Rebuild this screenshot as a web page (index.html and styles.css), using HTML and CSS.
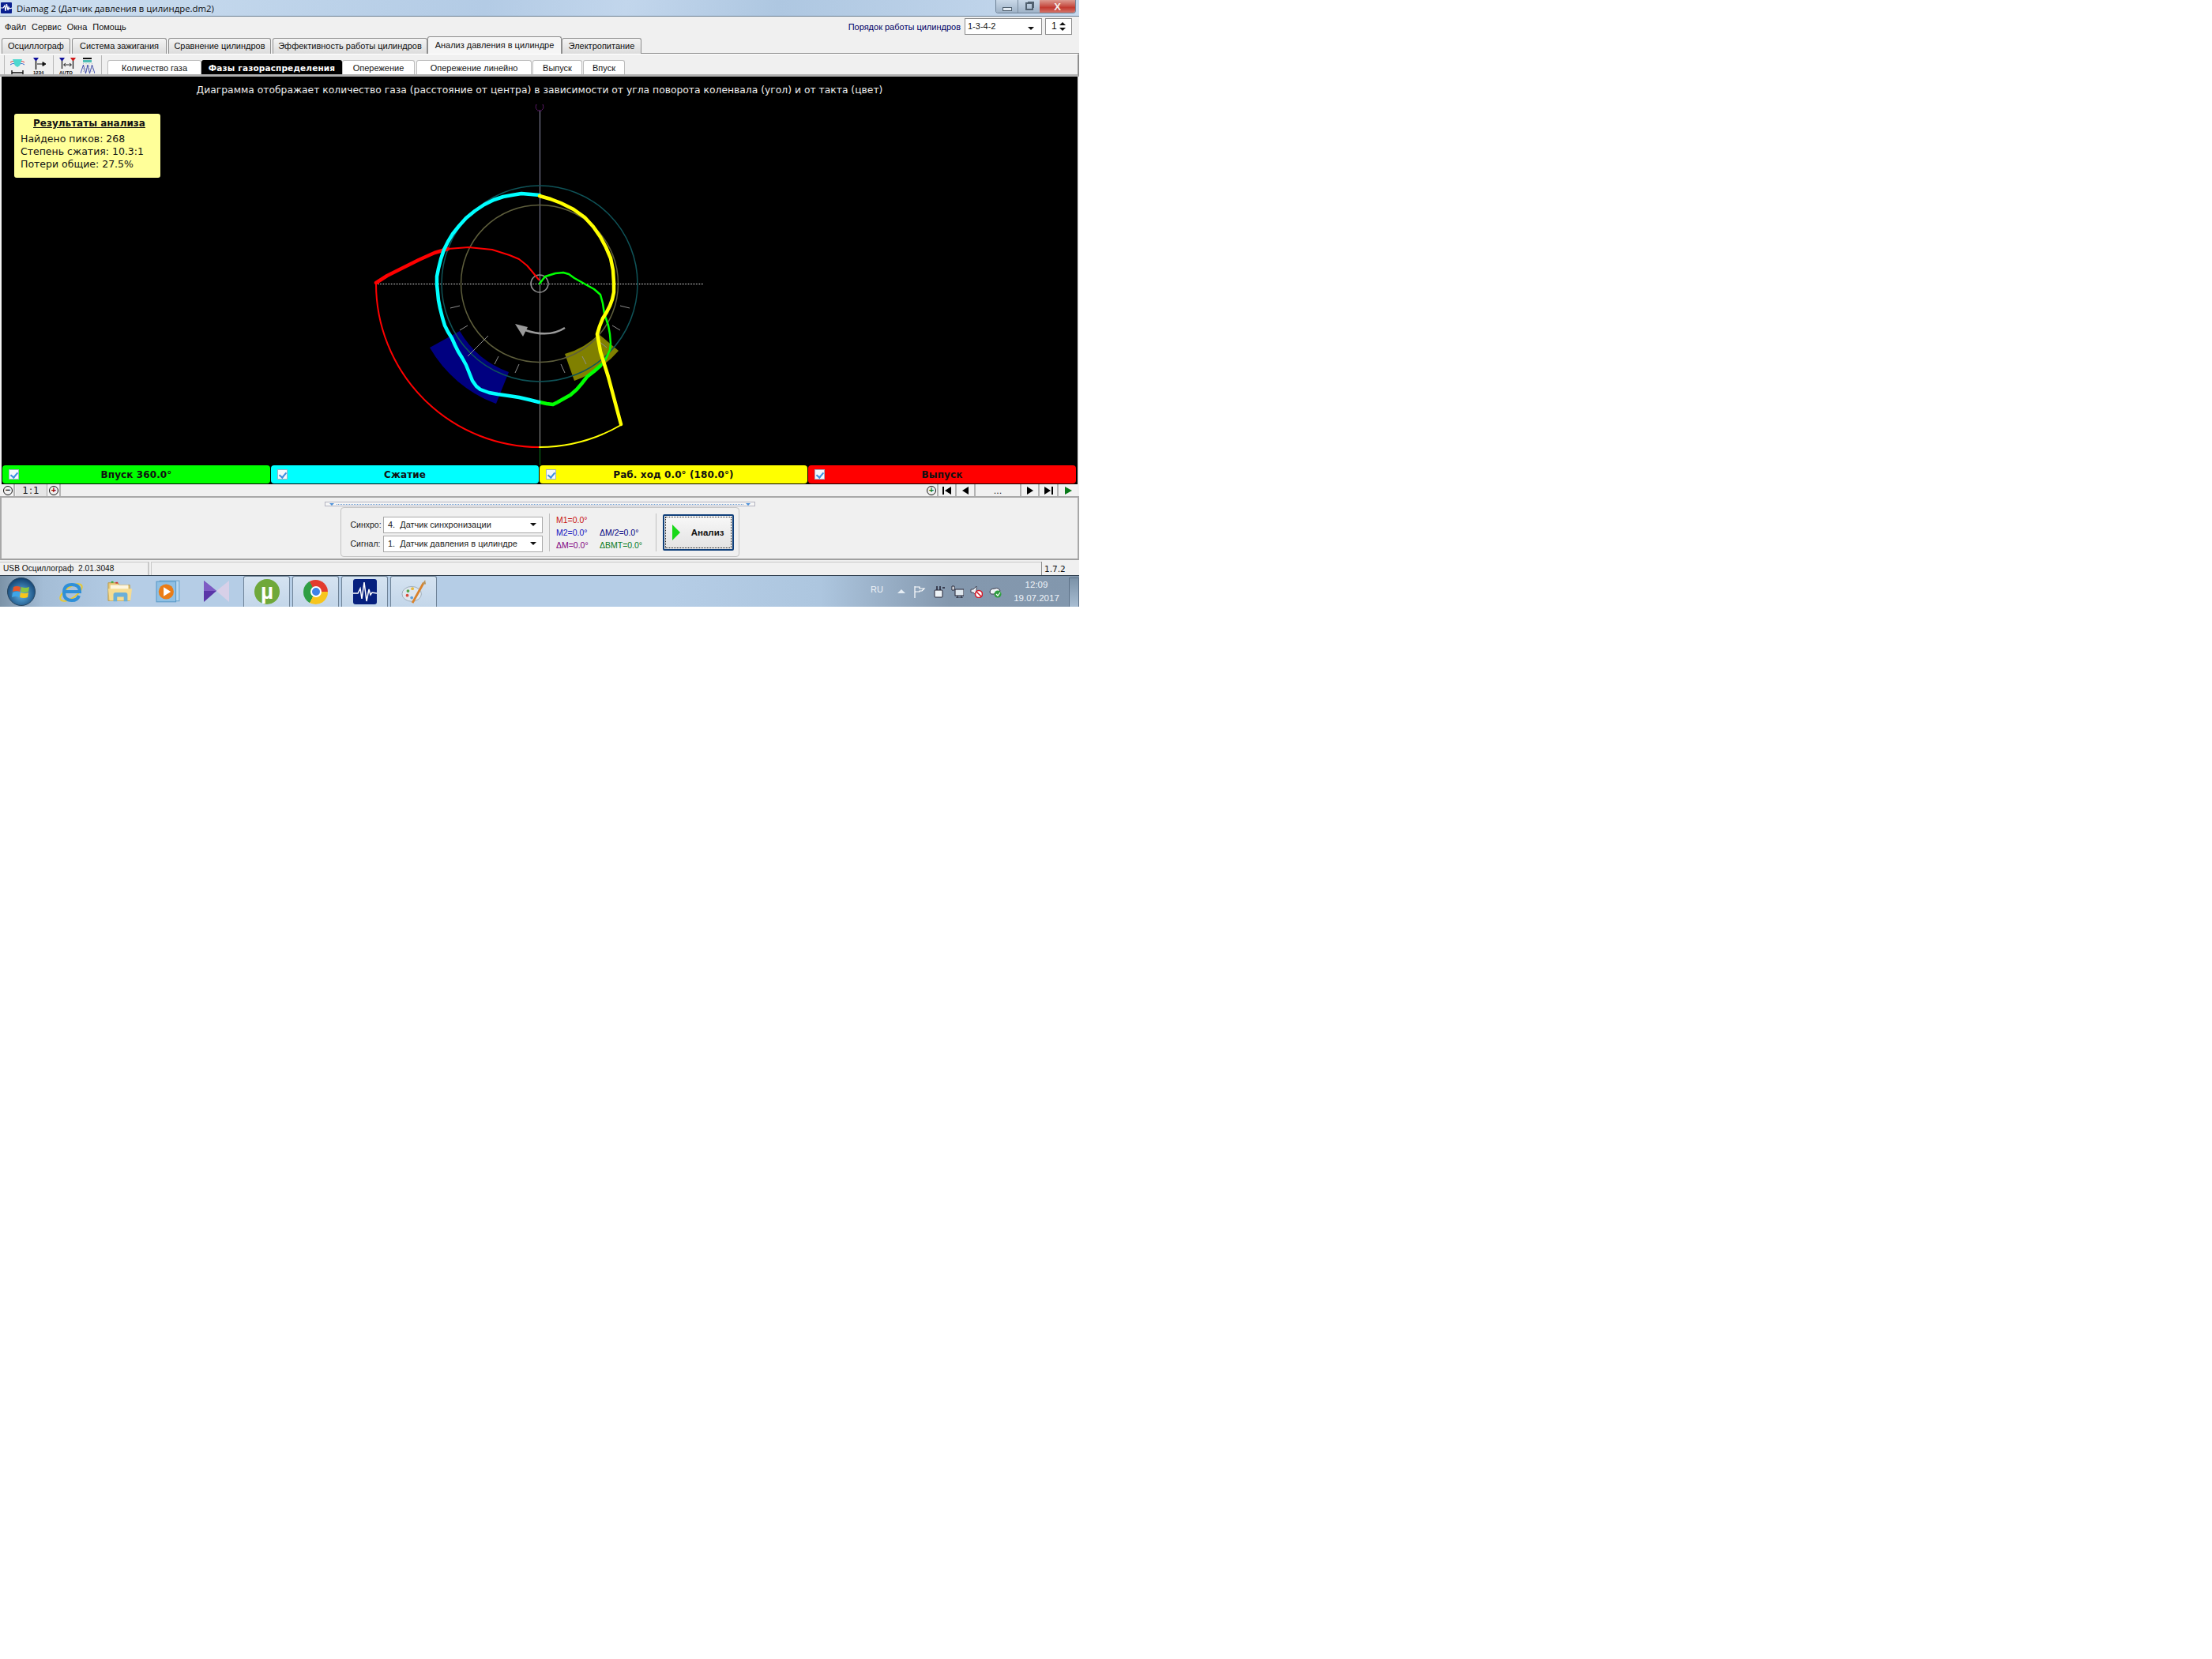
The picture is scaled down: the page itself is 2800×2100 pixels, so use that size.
FILE: index.html
```html
<!DOCTYPE html>
<html lang="ru">
<head>
    <meta charset="UTF-8">
    <title>Diamag 2</title>
    <link rel="stylesheet" href="styles.css">
</head>
<body>
<div class="window">
    <!-- title bar -->
    <div class="titlebar">
        <svg class="app-icon" viewBox="0 0 14 14"><rect width="14" height="14" rx="1" fill="#0a1f8f"/><polyline points="0,7 3,7 5,4 6,11 7.5,2 9,10 10,6 11,8 14,7" fill="none" stroke="#fff" stroke-width="1.2"/></svg>
        <span class="title-text">Diamag 2 (Датчик давления в цилиндре.dm2)</span>
        <div class="win-btns">
            <div class="win-btn win-min"><span class="min-glyph"></span></div>
            <div class="win-btn win-max"><span class="max-glyph"></span></div>
            <div class="win-btn win-close">X</div>
        </div>
    </div>

    <!-- menu -->
    <div class="menubar">
        <div class="menu-items">
            <span>Файл</span><span>Сервис</span><span>Окна</span><span>Помощь</span>
        </div>
        <div class="cyl-order">
            <span class="cyl-label">Порядок работы цилиндров</span>
            <div class="cyl-combo"><span>1-3-4-2</span><i class="arrow-down"></i></div>
            <div class="cyl-spin"><span>1</span><div class="spin-arrows"><i class="arrow-up"></i><i class="arrow-down"></i></div></div>
        </div>
    </div>

    <!-- main tabs -->
    <div class="main-tabs">
        <div class="tab t1">Осциллограф</div>
        <div class="tab t2">Система зажигания</div>
        <div class="tab t3">Сравнение цилиндров</div>
        <div class="tab t4">Эффективность работы цилиндров</div>
        <div class="tab t5 active">Анализ давления в цилиндре</div>
        <div class="tab t6">Электропитание</div>
        <div class="tabs-rest"></div>
    </div>

    <!-- toolbar + sub tabs -->
    <div class="toolbar">
        <span class="tool-sep first"></span>
        <svg class="tool t-a" viewBox="0 0 20 22"><path d="M1 7 Q6 3 10 9 Q14 3 19 7" fill="none" stroke="#d33" stroke-width="1"/><path d="M1 10 Q6 6 10 12 Q14 6 19 10" fill="none" stroke="#36c" stroke-width="1"/><path d="M4 3 H16 L13 11 L10 13 L7 11 Z" fill="#4fd8cf"/><path d="M3 20 H17 M3 17 V22 M17 17 V22" stroke="#111" stroke-width="1.4" fill="none"/></svg>
        <svg class="tool t-b" viewBox="0 0 18 22"><path d="M1 1 H8 L4.500 6 Z" fill="#11119c"/><path d="M4.500 5 V16" stroke="#111" stroke-width="1.4"/><path d="M6 9 H15 M13 6.500 L17 9 L13 11.500 Z" stroke="#111" fill="#111"/><text x="1" y="21.500" class="tool-text">1234</text></svg>
        <span class="tool-sep second"></span>
        <svg class="tool t-c" viewBox="0 0 21 22"><path d="M0 1 H7 L3.500 6 Z" fill="#11119c"/><path d="M14 1 H21 L17.500 6 Z" fill="#d01818"/><path d="M3.500 5 V15 M17.500 5 V15" stroke="#111" stroke-width="1.2"/><path d="M6 10 H15 M8 8 L5.500 10 L8 12 M13 8 L15.500 10 L13 12" stroke="#111" fill="none" stroke-width=".9"/><text x="0" y="21.500" class="tool-text">AUTO</text></svg>
        <svg class="tool t-d" viewBox="0 0 18 22"><rect x="3" y="1" width="11" height="2" fill="#111"/><rect x="3" y="4" width="11" height="3" fill="#4fbdb5"/><path d="M3.500 8 V20 M7 8 V20 M11 8 V20 M14.500 8 V20" stroke="#bbb" stroke-dasharray="1 1"/><path d="M0 21 L3.500 10 L6.500 21 L9 10 L11.500 21 L14.500 10 L18 21" fill="none" stroke="#2030a0" stroke-width=".8"/></svg>
        <span class="tool-sep third"></span>
        <div class="subtabs">
            <div class="subtab s1">Количество газа</div>
            <div class="subtab s2 current">Фазы газораспределения</div>
            <div class="subtab s3">Опережение</div>
            <div class="subtab s4">Опережение линейно</div>
            <div class="subtab s5">Выпуск</div>
            <div class="subtab s6">Впуск</div>
        </div>
    </div>

    <!-- diagram -->
    <div class="viewer">
        <div class="diagram">
            <svg class="plot" viewBox="2 97 1362 492">
                <path class="sector-blue" d="M582 419 A118 118 0 0 0 644 471 L628 511 A161 161 0 0 1 544 440 Z"/>
                <path class="sector-olive" d="M715 448 A95 95 0 0 0 758 423 L783 444 A131 131 0 0 1 727 482 Z"/>

                <line class="axis-v-top" x1="683.500" y1="140" x2="683.500" y2="359"/>
                <line class="axis-v" x1="683.500" y1="359" x2="683.500" y2="566"/>
                <line class="axis-v-green" x1="683.500" y1="566" x2="683.500" y2="589"/>
                <line class="axis-h" x1="475" y1="359.500" x2="890" y2="359.500"/>
                <path class="top-mark" d="M679 132 Q677 137 680 139 M687 132 Q689 137 686 139 M680 140 H686"/>

                <circle class="ring-olive" cx="683" cy="359" r="99.500"/>
                <circle class="ring-teal" cx="683" cy="359" r="124"/>
                <circle class="ring-center" cx="683" cy="359" r="11"/>

                <g class="ticks">
                    <line x1="570" y1="390" x2="582" y2="387"/>
                    <line x1="582" y1="418" x2="592" y2="412"/>
                    <line x1="592" y1="451" x2="618" y2="425"/>
                    <line x1="626" y1="461" x2="631" y2="451"/>
                    <line x1="652" y1="472" x2="657" y2="461"/>
                    <line x1="710" y1="461" x2="715" y2="472"/>
                    <line x1="737" y1="451" x2="742" y2="461"/>
                    <line x1="758" y1="432" x2="768" y2="440"/>
                    <line x1="775" y1="412" x2="785" y2="418"/>
                    <line x1="785" y1="387" x2="797" y2="390"/>
                </g>

                <path class="turn-arrow" d="M715 415 Q695 428 665 418"/>
                <path class="turn-head" d="M652 410 L668 414 L662 426 Z"/>

                <polyline class="trace trace-red" points="476,358 490,349 510,339 530,329 550,320 567,315"/>
                <polyline class="trace trace-red thin" points="567,315 593,313 623,316 645,323 657,328 667,336 673,343 682,354"/>
                <path class="trace trace-red thin" d="M683 566 A207 207 0 0 1 476 359"/>
                <polyline class="trace trace-green thin" points="683,359 690,350 703,346 713,345 720,347 727,352 743,361 752,366 760,373 763,384 765,397 770,412 772,423 773,435 772,443 767,454 760,463"/>
                <polyline class="trace trace-green" points="760,463 752,470 743,477 736,486 730,493 722,500 713,505 706,509 700,512 692,511 683,509"/>
                <polyline class="trace trace-cyan" points="683,247 672,246 660,245 648,247 637,249 625,253 613,259 601,267 590,276 581,286 573,296 567,306 562,316 558,328 555,340 553,350 553,360 554,370 555,380 557,390 560,402 563,412 567,420 572,428 576,437 580,445 585,453 590,462 594,472 598,482 603,489 608,493 619,497 630,499 644,501 657,503 670,506 682,509"/>
                <polyline class="trace trace-yellow" points="683,248 697,252 710,257 726,265 740,275 751,287 760,300 767,313 773,327 776,342 777,358 777,370 775,379 772,387 768,395 763,403 759,413 756,423 758,434 760,445 765,461 770,477 774,492 778,507 782,522 786,537"/>
                <path class="trace trace-yellow thin" d="M786 538 A207 207 0 0 1 683 566"/>
            </svg>
            <div class="caption">Диаграмма отображает количество газа (расстояние от центра) в зависимости от угла поворота коленвала (угол) и от такта (цвет)</div>
            <div class="results">
                <div class="results-title">Результаты анализа</div>
                <div>Найдено пиков: 268</div>
                <div>Степень сжатия: 10.3:1</div>
                <div>Потери общие: 27.5%</div>
            </div>
        </div>
        <div class="phases">
            <div class="phase green"><span class="check"></span><b>Впуск 360.0°</b></div>
            <div class="phase cyan"><span class="check"></span><b>Сжатие</b></div>
            <div class="phase yellow"><span class="check"></span><b>Раб. ход 0.0° (180.0°)</b></div>
            <div class="phase red"><span class="check"></span><b>Выпуск</b></div>
        </div>
    </div>

    <!-- zoom + navigation -->
    <div class="navrow">
        <div class="nav-left">
            <div class="nav-btn round-btn"><span class="round minus">−</span></div>
            <div class="nav-scale">1:1</div>
            <div class="nav-btn round-btn"><span class="round plus-red">+</span></div>
        </div>
        <div class="nav-right">
            <div class="nav-btn round-btn"><span class="round plus-green">+</span></div>
            <div class="nav-btn n-first"><svg viewBox="0 0 12 10"><path d="M0 0 H2 V10 H0 Z M11 0 V10 L3 5 Z"/></svg></div>
            <div class="nav-btn n-prev"><svg viewBox="0 0 12 10"><path d="M10 0 V10 L2 5 Z"/></svg></div>
            <div class="nav-pos">...</div>
            <div class="nav-btn n-next"><svg viewBox="0 0 12 10"><path d="M2 0 V10 L10 5 Z"/></svg></div>
            <div class="nav-btn n-last"><svg viewBox="0 0 12 10"><path d="M1 0 V10 L9 5 Z M10 0 H12 V10 H10 Z"/></svg></div>
            <div class="nav-btn n-play"><svg viewBox="0 0 12 10"><path class="play-green" d="M2 0 V10 L11 5 Z"/></svg></div>
        </div>
    </div>

    <!-- analysis panel -->
    <div class="panel">
        <div class="splitter"><i></i><span class="split-dots"></span><i></i></div>
        <div class="group">
            <div class="selects">
                <div class="select-row"><label>Синхро:</label><div class="combo"><span>4.&nbsp; Датчик синхронизации</span><i class="arrow-down"></i></div></div>
                <div class="select-row"><label>Сигнал:</label><div class="combo"><span>1.&nbsp; Датчик давления в цилиндре</span><i class="arrow-down"></i></div></div>
            </div>
            <span class="group-sep"></span>
            <div class="markers">
                <span class="m-red">M1=0.0°</span><span></span>
                <span class="m-blue">M2=0.0°</span><span class="m-navy">ΔM/2=0.0°</span>
                <span class="m-purple">ΔM=0.0°</span><span class="m-green">ΔBMT=0.0°</span>
            </div>
            <span class="group-sep"></span>
            <div class="run-btn">
                <div class="run-inner">
                    <svg class="run-icon" viewBox="0 0 10 20"><path d="M0 0 L10 10 L0 20 Z"/></svg>
                    <span>Анализ</span>
                </div>
            </div>
        </div>
    </div>

    <!-- status bar -->
    <div class="statusbar">
        <div class="st-a">USB Осциллограф&nbsp; 2.01.3048</div>
        <div class="st-b"></div>
        <div class="st-c">1.7.2</div>
    </div>

    <!-- taskbar -->
    <div class="taskbar">
        <div class="start-orb">
            <svg viewBox="0 0 36 36">
                <defs><radialGradient id="orb" cx=".5" cy=".6" r=".6"><stop offset="0" stop-color="#5fb4e8"/><stop offset="1" stop-color="#123f6e"/></radialGradient></defs>
                <circle cx="18" cy="18" r="17.500" fill="url(#orb)" stroke="#27455f"/>
                <path d="M8 12 Q12 10 17 12 L16 18 Q12 16 7 18 Z" fill="#e8562a"/>
                <path d="M18 12 Q23 14 28 12 L27 18 Q22 20 17 18 Z" fill="#8cc63f"/>
                <path d="M7 19 Q12 17 16 19 L15 25 Q11 23 6 25 Z" fill="#3fa6e8"/>
                <path d="M17 19 Q22 21 27 19 L26 25 Q21 27 16 25 Z" fill="#f7c61b"/>
            </svg>
        </div>
        <div class="pin pin-ie">
            <svg viewBox="0 0 32 32"><ellipse cx="15" cy="17" rx="16" ry="7" transform="rotate(-35 15 17)" fill="none" stroke="#e9c92f" stroke-width="2"/><path d="M6 16 H26 Q26 7 16 7 Q6 7 6 17 Q6 27 16 27 Q23 27 25 21" fill="none" stroke="#2e8fd8" stroke-width="4"/></svg>
        </div>
        <div class="pin pin-folder">
            <svg viewBox="0 0 34 32"><path d="M1 4 H14 L16 7 H30 V28 H1 Z" fill="#e8c878" stroke="#b89a4c"/><rect x="4" y="7" width="24" height="8" fill="#fdf6e0"/><rect x="5" y="2" width="3" height="2" fill="#3a3"/><rect x="11" y="3" width="3" height="2" fill="#c33"/><path d="M1 12 H33 L31 28 H3 Z" fill="#f6dc92"/><path d="M8 29 V20 Q8 17 11 17 H24 Q27 17 27 20 V29 H22 V23 H13 V29 Z" fill="#6aafd8"/></svg>
        </div>
        <div class="pin pin-media">
            <svg viewBox="0 0 30 30"><rect x="5" y="2" width="23" height="24" fill="#bcd8ee" stroke="#6aa5cf"/><rect x="1" y="3" width="23" height="24" fill="#8fc0e4" stroke="#5a9ac8"/><circle cx="12.500" cy="15" r="9" fill="#ea7d16"/><path d="M9.500 9.500 L18 15 L9.500 20.500 Z" fill="#fff"/></svg>
        </div>
        <div class="pin pin-vs">
            <svg viewBox="0 0 34 32"><path d="M1 2 L17 15 L1 29 Z" fill="#5a36a8"/><path d="M33 2 L17 15 L33 29 Z" fill="#d8d0e8"/><path d="M1 2 L17 15 L1 15 Z" fill="#7e5cc4"/></svg>
        </div>
        <div class="task-btn first-btn">
            <svg viewBox="0 0 32 32"><circle cx="16" cy="16" r="16" fill="#6fa83a"/><text x="16" y="25" class="utorrent-glyph">µ</text></svg>
        </div>
        <div class="task-btn">
            <div class="chrome"><span></span></div>
        </div>
        <div class="task-btn">
            <svg viewBox="0 0 30 32"><rect width="30" height="32" rx="3" fill="#06207e"/><polyline points="0,18 6,18 9,12 11,25 14,4 17,28 20,13 22,20 24,17 30,18" fill="none" stroke="#fff" stroke-width="1.500"/></svg>
        </div>
        <div class="task-btn">
            <svg viewBox="0 0 34 32"><ellipse cx="14" cy="19" rx="13" ry="10" fill="#dfe7ee" stroke="#9aaab8"/><circle cx="8" cy="21" r="2" fill="#d94c3c"/><circle cx="9" cy="15" r="2" fill="#53a548"/><circle cx="15" cy="12" r="2" fill="#e8b93c"/><circle cx="14" cy="24" r="2" fill="#5fa0d8"/><path d="M15 31 L30 4" stroke="#d9822b" stroke-width="3"/><path d="M28 6 L32 0 L33 6 Z" fill="#b9935a"/></svg>
        </div>
        <div class="tray">
            <span class="lang">RU</span>
            <i class="tray-up"></i>
            <svg class="tray-ico" viewBox="0 0 16 16"><path d="M2 1 V16 M2 2 H8 V4 H14 L11 7 H8 V8 H2" fill="none" stroke="#fff" stroke-width="1.200"/></svg>
            <svg class="tray-ico" viewBox="0 0 16 16"><rect x="3" y="6" width="10" height="9" rx="1" fill="#eef3f7" stroke="#223"/><path d="M6 1 V6 M10 1 V6 M13 3 H16" stroke="#223" stroke-width="1.500"/></svg>
            <svg class="tray-ico" viewBox="0 0 16 16"><rect x="5" y="5" width="11" height="8" fill="#dfe7ee" stroke="#223"/><path d="M8 13 V16 M13 13 V16 M6 16 H15 M1 1 H4 V6 H1 Z" stroke="#223" fill="#fff"/></svg>
            <svg class="tray-ico" viewBox="0 0 16 16"><path d="M1 5 H4 L8 1 V13 L4 9 H1 Z" fill="#e8eef3" stroke="#445"/><circle cx="11" cy="11" r="4.500" fill="#fff" stroke="#d21a2a" stroke-width="1.600"/><path d="M8 8 L14 14" stroke="#d21a2a" stroke-width="1.600"/></svg>
            <svg class="tray-ico" viewBox="0 0 16 16"><path d="M1 9 Q1 4 7 4 Q12 2 14 7 L6 11 Q2 12 1 9 Z" fill="#eef3f7" stroke="#334"/><circle cx="11" cy="11" r="4.500" fill="#2f9e3f"/><path d="M9 11 L11 13 L14 9" fill="none" stroke="#fff" stroke-width="1.200"/></svg>
            <div class="clock"><div>12:09</div><div>19.07.2017</div></div>
            <div class="show-desktop"></div>
        </div>
    </div>
</div>
</body>
</html>
```

FILE: styles.css
```css
* {
    box-sizing: border-box;
}

html, body {
    margin: 0;
    padding: 0;
    background: #fff;
}

body {
    font-family: 'Liberation Sans', Arial, sans-serif;
    font-size: 11px;
    color: #111;
}

.window {
    width: 1366px;
    height: 768px;
    display: flex;
    flex-direction: column;
    background: #f0f0f0;
}

/* title bar */
.titlebar {
    height: 21px;
    display: flex;
    align-items: center;
    position: relative;
    background: linear-gradient(100deg, #cfe0f1 0%, #bcd2e9 30%, #b3cbe5 45%, #c2d6ec 58%, #aec7e1 72%, #c6d9ee 100%);
    border-bottom: 1px solid #6b7f93;
}

.app-icon {
    width: 14px;
    height: 14px;
    margin-left: 1px;
}

.title-text {
    margin-left: 6px;
    font-family: 'Open Sans', sans-serif;
    font-size: 11.4px;
    color: #111;
}

.win-btns {
    position: absolute;
    left: 1260px;
    top: 0;
    width: 102px;
    height: 17px;
    display: flex;
    border: 1px solid #6f8296;
    border-top: none;
    border-radius: 0 0 4px 4px;
    overflow: hidden;
}

.win-btn {
    display: flex;
    align-items: center;
    justify-content: center;
}

.win-min {
    width: 28px;
    background: linear-gradient(#c9d8e8, #9fb3c8);
    border-right: 1px solid #7b8da0;
}

.win-max {
    width: 27px;
    background: linear-gradient(#c9d8e8, #9fb3c8);
}

.win-close {
    flex: 1;
    background: linear-gradient(#dc9a90 0%, #c9564c 45%, #c23a30 60%, #d4756b 100%);
    color: #f4f0ee;
    font-weight: bold;
    font-size: 13px;
}

.min-glyph {
    width: 12px;
    height: 5px;
    margin-top: 6px;
    border: 1px solid #50606f;
    background: #e4ecf4;
}

.max-glyph {
    width: 10px;
    height: 10px;
    border: 2px solid #50606f;
    box-shadow: 2px -2px 0 -1px #50606f;
}

/* menu */
.menubar {
    height: 27px;
    display: flex;
    justify-content: space-between;
    align-items: flex-start;
}

.menu-items {
    display: flex;
    gap: 7px;
    padding: 7px 0 0 6px;
}

.cyl-order {
    display: flex;
    align-items: flex-start;
    padding: 2px 9px 0 0;
}

.cyl-label {
    margin-top: 5px;
    color: #000066;
}

.cyl-combo {
    width: 98px;
    height: 21px;
    margin-left: 5px;
    padding: 3px 9px 0 3px;
    display: flex;
    justify-content: space-between;
    background: #fff;
    border: 1px solid #8a8a8a;
}

.cyl-combo .arrow-down {
    margin-top: 7px;
}

.cyl-spin {
    width: 34px;
    height: 21px;
    margin-left: 4px;
    padding: 2px 7px 0 7px;
    display: flex;
    justify-content: space-between;
    background: #fff;
    border: 1px solid #8a8a8a;
    font-size: 12px;
}

.spin-arrows {
    display: flex;
    flex-direction: column;
    gap: 3px;
    margin-top: 2px;
}

.arrow-down {
    display: block;
    width: 0;
    height: 0;
    border: 4px solid transparent;
    border-top: 4px solid #111;
    border-bottom: none;
}

.arrow-up {
    display: block;
    width: 0;
    height: 0;
    border: 4px solid transparent;
    border-bottom: 4px solid #111;
    border-top: none;
}

/* main tabs */
.main-tabs {
    height: 20px;
    display: flex;
    align-items: flex-end;
    padding-left: 2px;
}

.tab {
    height: 20px;
    margin-right: 2px;
    padding-top: 3px;
    text-align: center;
    font-size: 11px;
    background: linear-gradient(#f4f4f4, #dcdcdc);
    border: 1px solid #8e8e8e;
    border-bottom: none;
    border-radius: 3px 3px 0 0;
}

.tab.active {
    height: 22px;
    margin: 0;
    padding-top: 4px;
    background: #f5f5f5;
}

.t1 { width: 87px; }
.t2 { width: 120px; }
.t3 { width: 130px; }
.t4 { width: 196px; margin-right: 0; }
.t5 { width: 170px; }
.t6 { width: 101px; margin-right: 0; }

.tabs-rest {
    flex: 1;
    height: 1px;
    background: #8e8e8e;
}

/* toolbar */
.toolbar {
    height: 29px;
    display: flex;
    align-items: flex-start;
    border-top: 1px solid #fff;
    border-right: 2px solid #8e8e8e;
    border-bottom: 3px solid #b0b0b0;
}

.tool-sep {
    width: 1px;
    height: 24px;
    margin-top: 1px;
    background: #b8b8b8;
}

.tool-sep.first { margin-left: 5px; }
.tool-sep.second { margin-left: 8px; }
.tool-sep.third { margin-left: 8px; }

.tool {
    height: 22px;
    margin-top: 3px;
}

.t-a { width: 20px; margin-left: 6px; }
.t-b { width: 18px; margin-left: 9px; }
.t-c { width: 21px; margin-left: 7px; }
.t-d { width: 18px; margin-left: 6px; }

.tool-text {
    font-size: 6px;
    font-weight: bold;
    fill: #111;
}

.subtabs {
    display: flex;
    margin: 7px 0 0 7px;
    align-items: flex-end;
}

.subtab {
    height: 18px;
    padding-top: 3px;
    text-align: center;
    background: #fff;
    border: 1px solid #bdbdbd;
    border-bottom: none;
    border-radius: 3px 3px 0 0;
}

.subtab.current {
    background: #000;
    color: #fff;
    font-weight: bold;
    border-color: #000;
    letter-spacing: .15px;
    font-family: 'DejaVu Sans', sans-serif;
    font-size: 10.5px;
}

.s1 { width: 119px; }
.s2 { width: 178px; }
.s3 { width: 92px; margin-right: 2px; }
.s4 { width: 146px; margin-right: 1px; }
.s5 { width: 63px; margin-right: 1px; }
.s6 { width: 53px; }

/* diagram */
.viewer {
    height: 516px;
    margin: 0 2px;
    background: #000;
}

.diagram {
    position: relative;
    height: 492px;
}

.plot {
    display: block;
    width: 1362px;
    height: 492px;
}

.caption {
    position: absolute;
    left: 0;
    right: 0;
    top: 10px;
    text-align: center;
    color: #eee;
    font-family: 'DejaVu Sans', sans-serif;
    font-size: 12.33px;
}

.results {
    position: absolute;
    left: 16px;
    top: 47px;
    width: 185px;
    height: 81px;
    padding: 4px 8px;
    background: #ffff99;
    border-radius: 3px;
    font-family: 'DejaVu Sans', sans-serif;
    font-size: 12.5px;
    line-height: 16px;
    color: #111;
}

.results-title {
    margin-bottom: 4px;
    padding-left: 5px;
    text-align: center;
    font-size: 12px;
    font-weight: bold;
    text-decoration: underline;
}

.sector-blue { fill: #000080; }
.sector-olive { fill: #808000; }

.axis-v-top {
    stroke: #8c8ca8;
    stroke-width: 1;
}

.axis-v {
    stroke: #999;
    stroke-width: 1;
}

.axis-v-green {
    stroke: #0a7a1a;
    stroke-width: 1;
}

.axis-h {
    stroke: #ddd;
    stroke-width: 1;
    stroke-dasharray: 1 1;
}

.top-mark {
    fill: none;
    stroke: #5c1a6a;
    stroke-width: 1;
}

.ring-olive, .ring-teal, .ring-center {
    fill: none;
}

.ring-olive {
    stroke: #5e5e3c;
    stroke-width: 1.5;
}

.ring-teal {
    stroke: #0f5358;
    stroke-width: 1.5;
}

.ring-center {
    stroke: #8c8c8c;
    stroke-width: 1.5;
}

.ticks line {
    stroke: #8f8f8f;
    stroke-width: 1;
}

.turn-arrow {
    fill: none;
    stroke: #9a9a9a;
    stroke-width: 2.5;
}

.turn-head {
    fill: #9a9a9a;
}

.trace {
    fill: none;
    stroke-width: 4.5;
    stroke-linejoin: round;
    stroke-linecap: round;
}

.trace.thin {
    stroke-width: 2;
}

.trace-red { stroke: #ff0000; }
.trace-green { stroke: #00ff00; }
.trace-green.thin { stroke-width: 2.5; }
.trace-cyan { stroke: #00ffff; }
.trace-yellow { stroke: #ffff00; }

.phases {
    height: 23px;
    margin: 0 2px 1px 1px;
    display: grid;
    grid-template-columns: repeat(4, 339px);
    gap: 1px;
}

.phase {
    display: grid;
    grid-template-columns: 36px 1fr 36px;
    align-items: center;
    border-radius: 4px;
    font-family: 'DejaVu Sans', sans-serif;
    font-size: 12px;
    color: #111;
    text-align: center;
}

.phase b {
    grid-column: 2;
    letter-spacing: .1px;
}

.phase.green { background: #00ff00; }
.phase.cyan { background: #00ffff; }
.phase.yellow { background: #ffff00; }
.phase.red { background: #ff0000; }

.check {
    grid-column: 1;
    width: 13px;
    height: 13px;
    margin-left: 8px;
    background: #f4f7fb;
    border: 1px solid #9fb0c4;
    position: relative;
}

.check::after {
    content: "";
    position: absolute;
    left: 3px;
    top: 1px;
    width: 4px;
    height: 7px;
    border: solid #3b8ee0;
    border-width: 0 2px 2px 0;
    transform: rotate(40deg);
}

/* zoom + navigation */
.navrow {
    height: 17px;
    display: flex;
    justify-content: space-between;
    padding: 0 3px;
    border-bottom: 2px solid #a8a8a8;
}

.nav-left, .nav-right {
    display: flex;
    height: 15px;
}

.nav-btn {
    height: 15px;
    display: flex;
    align-items: center;
    justify-content: center;
    background: #f2f2f2;
    border-right: 2px solid #b4b4b4;
}

.round-btn {
    width: 16px;
}

.round {
    width: 12px;
    height: 12px;
    display: flex;
    align-items: center;
    justify-content: center;
    border: 1.5px solid #111;
    border-radius: 50%;
    font-weight: bold;
    font-size: 11px;
    line-height: 1;
}

.plus-red { color: #900; }
.plus-green { color: #0a7a1a; }

.nav-scale {
    width: 40px;
    text-align: center;
    margin: 0 1px 0 1px;
    background: #e6e6e6;
    border-right: 1px solid #aaa;
    font-family: 'DejaVu Sans', sans-serif;
    font-size: 12px;
    line-height: 17px;
    letter-spacing: 1px;
}

.nav-btn svg {
    width: 12px;
    height: 10px;
}

.n-first { width: 23px; }
.n-prev { width: 24px; }
.n-next { width: 23px; }
.n-last { width: 24px; }
.n-play { width: 23px; border-right: none; }

.play-green { fill: #0a7a1a; }

.nav-pos {
    width: 58px;
    text-align: center;
    line-height: 17px;
    font-family: 'DejaVu Sans', sans-serif;
    font-size: 11px;
    border-right: 2px solid #b4b4b4;
}

/* analysis panel */
.panel {
    height: 79px;
    display: flex;
    flex-direction: column;
    align-items: center;
    border-left: 2px solid #a8a8a8;
    border-right: 2px solid #a8a8a8;
    border-bottom: 2px solid #a0a0a0;
}

.splitter {
    width: 545px;
    height: 6px;
    margin-top: 5px;
    display: flex;
    align-items: center;
    justify-content: space-between;
    padding: 0 5px;
    border: 1px solid #b4b4c0;
    background: #f6f6f6;
}

.splitter i {
    width: 0;
    height: 0;
    border: 3px solid transparent;
    border-top: 3px solid #4a8fd8;
    border-bottom: none;
}

.split-dots {
    flex: 1;
    margin: 0 3px;
    border-top: 1px dotted #6a9ad0;
}

.group {
    width: 505px;
    height: 63px;
    margin-top: 1px;
    padding: 0 6px 0 12px;
    display: flex;
    align-items: center;
    border: 1px solid #c4c4c4;
    border-radius: 4px;
}

.selects {
    display: flex;
    flex-direction: column;
    gap: 3px;
    width: 244px;
    margin-top: 5px;
}

.select-row {
    display: flex;
    align-items: center;
    justify-content: space-between;
    color: #222;
    font-size: 10.5px;
}

.combo {
    width: 202px;
    height: 21px;
    padding: 0 7px 0 5px;
    display: flex;
    align-items: center;
    justify-content: space-between;
    background: #fff;
    border: 1px solid #a8a8a8;
    font-size: 11px;
}

.group-sep {
    width: 1px;
    height: 48px;
    margin-left: 8px;
    background: #c0c0c0;
}

.markers {
    width: 134px;
    padding-left: 8px;
    display: grid;
    grid-template-columns: 55px 1fr;
    line-height: 16px;
    font-size: 10.5px;
}

.markers + .group-sep {
    margin-left: 0;
}

.m-red { color: #c81010; }
.m-blue { color: #1010c0; }
.m-purple { color: #800080; }
.m-navy { color: #000080; }
.m-green { color: #0a7a1a; }

.run-btn {
    width: 90px;
    height: 46px;
    margin-left: 8px;
    padding: 1px;
    border: 2px solid #0f3f7a;
    border-radius: 2px;
    background: linear-gradient(#f8f8f8, #e2e2e2);
}

.run-inner {
    height: 100%;
    display: flex;
    align-items: center;
    padding-left: 8px;
    border: 1px dotted #222;
    font-weight: bold;
    font-size: 11.5px;
}

.run-icon {
    width: 10px;
    height: 20px;
    margin-right: 14px;
}

.run-icon path {
    fill: #18d818;
}

/* status bar */
.statusbar {
    height: 17px;
    display: flex;
    margin-top: 2px;
    background: #f0f0f0;
}

.st-a {
    width: 189px;
    padding-top: 2px;
    padding-left: 4px;
    border-right: 2px solid #c8c8c8;
    border-top: 1px solid #c8c8c8;
    font-size: 10.2px;
}

.st-b {
    width: 1127px;
    margin-left: 2px;
    border-top: 1px solid #c8c8c8;
    border-left: 1px solid #c8c8c8;
}

.st-c {
    flex: 1;
    padding: 3px 0 0 3px;
    border-left: 1px solid #888;
    font-family: 'DejaVu Sans', sans-serif;
    font-size: 10.5px;
}

/* taskbar */
.taskbar {
    flex: 1;
    display: flex;
    align-items: stretch;
    background: linear-gradient(90deg, #7c93a8 0%, #a4bdd6 4%, #b5cde6 12%, #b5cde6 62%, #adc6df 76%, #8498ae 88%, #8297ad 100%);
    border-top: 1px solid #30404f;
}

.start-orb {
    width: 60px;
    padding-right: 6px;
    display: flex;
    align-items: center;
    justify-content: center;
}

.start-orb svg {
    width: 36px;
    height: 36px;
}

.pin {
    width: 61px;
    display: flex;
    align-items: center;
    justify-content: center;
}

.pin svg {
    width: 32px;
    height: 32px;
}

.pin-vs svg {
    width: 34px;
}

.task-btn {
    width: 59px;
    margin-right: 3px;
    display: flex;
    align-items: center;
    justify-content: center;
    background: linear-gradient(#d5e3f1, #c3d6e9);
    border: 1px solid #6e8296;
    border-bottom: none;
    border-radius: 3px 3px 0 0;
}

.first-btn {
    margin-left: 4px;
}

.task-btn svg {
    width: 32px;
    height: 32px;
}

.utorrent-glyph {
    font-family: 'Liberation Sans', sans-serif;
    font-size: 28px;
    font-weight: bold;
    fill: #fff;
    text-anchor: middle;
}

.chrome {
    width: 31px;
    height: 31px;
    display: flex;
    align-items: center;
    justify-content: center;
    border-radius: 50%;
    background: conic-gradient(#e33b2e 0 90deg, #f7c51d 90deg 210deg, #2f9e44 210deg 330deg, #e33b2e 330deg);
}

.chrome span {
    width: 14px;
    height: 14px;
    border-radius: 50%;
    background: #3f83e8;
    border: 2px solid #fff;
}

.tray {
    flex: 1;
    display: flex;
    align-items: center;
    justify-content: flex-end;
    color: #eef3f8;
}

.lang {
    margin: -6px 18px 0 0;
    font-size: 11px;
}

.tray-up {
    width: 0;
    height: 0;
    margin-right: 10px;
    border: 5px solid transparent;
    border-bottom: 5px solid #e6edf4;
    border-top: none;
}

.tray-ico {
    width: 16px;
    height: 16px;
    margin-right: 8px;
}

.clock {
    width: 62px;
    margin: 0 10px 0 5px;
    text-align: center;
    line-height: 17px;
    font-family: 'Liberation Sans', sans-serif;
    font-size: 11.5px;
}

.show-desktop {
    width: 13px;
    height: 37px;
    align-self: flex-end;
    background: linear-gradient(#7b92a8, #a8bdd2);
    border: 1px solid #5d7187;
    border-bottom: none;
    border-radius: 1px;
}
```
